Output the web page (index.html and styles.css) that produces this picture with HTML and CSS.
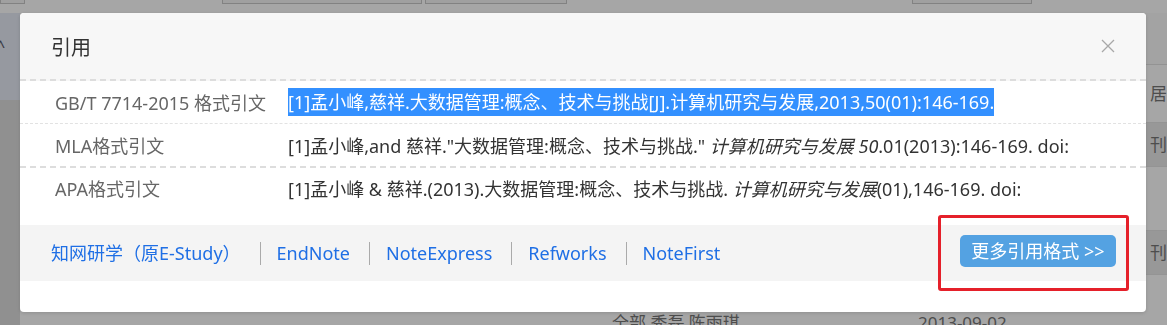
FILE: index.html
```html
<!doctype html>
<html lang="zh-CN">

<head>
  <meta charset="UTF-8" />
  <meta name="viewport" content="width=device-width, initial-scale=1.0" />
  <title>引用</title>
  <link rel="stylesheet" href="styles.css">
</head>

<body>
  <div class="page">
    <div class="page-top">
      <div class="tab tab-a"></div>
      <div class="tab tab-b"></div>
      <div class="tab tab-c"></div>
      <div class="tab tab-d"></div>
    </div>
    <div class="page-body">
      <div class="side">
        <div class="side-active"><span class="side-arrow">^</span></div>
      </div>
      <div class="table">
        <div class="thead"></div>
        <div class="trow row-a"><span></span><span></span><span></span><span>居库</span></div>
        <div class="trow row-b"><span></span><span></span><span></span><span>刊</span></div>
        <div class="trow row-c"><span></span><span></span><span></span><span></span></div>
        <div class="trow row-d"><span></span><span></span><span></span><span>刊</span></div>
        <div class="trow row-e"><span></span><span>全部 秀磊 陈雨琪</span><span>2013-09-02</span><span></span></div>
      </div>
    </div>
  </div>

  <div class="mask"></div>

  <div class="dialog">
    <div class="dialog-head">
      <span class="dialog-title">引用</span>
      <svg class="dialog-close" width="14" height="14" viewBox="0 0 14 14">
        <path d="M1 1 L13 13 M13 1 L1 13" stroke="#a8a8a8" stroke-width="1.3" fill="none" />
      </svg>
    </div>

    <div class="quote-list">
      <div class="quote-row row-first">
        <div class="quote-label">GB/T 7714-2015 格式引文</div>
        <div class="quote-text"><span class="selected">[1]孟小峰,慈祥.大数据管理:概念、技术与挑战[J].计算机研究与发展,2013,50(01):146-169.</span></div>
      </div>
      <div class="quote-row row-second">
        <div class="quote-label">MLA格式引文</div>
        <div class="quote-text">[1]孟小峰,and 慈祥."大数据管理:概念、技术与挑战." <i>计算机研究与发展 50</i>.01(2013):146-169. doi:</div>
      </div>
      <div class="quote-row">
        <div class="quote-label">APA格式引文</div>
        <div class="quote-text">[1]孟小峰 &amp; 慈祥.(2013).大数据管理:概念、技术与挑战. <i>计算机研究与发展</i>(01),146-169. doi:</div>
      </div>
    </div>

    <div class="dialog-foot">
      <div class="export-links">
        <a>知网研学（原E-Study）</a>
        <a>EndNote</a>
        <a>NoteExpress</a>
        <a>Refworks</a>
        <a>NoteFirst</a>
      </div>
      <div class="btn-more">更多引用格式 &gt;&gt;</div>
    </div>

    <div class="mark-box"></div>
  </div>
</body>

</html>
```

FILE: styles.css
```css
* {
  box-sizing: border-box;
}

body {
  margin: 0;
  width: 1167px;
  height: 325px;
  overflow: hidden;
  font-family: "Noto Sans", "Noto Sans CJK SC", sans-serif;
  background-color: #EAEAEA;
}

/* page behind the dialog */
.page {
  width: 1167px;
  height: 325px;
}

.page-top {
  display: flex;
  height: 13px;
  background-color: #FFFFFF;
}

.tab {
  height: 4px;
  border: 1px solid #C8C8C8;
  border-top: none;
  background-color: #F6F6F6;
}

.tab-a {
  width: 25px;
}

.tab-b {
  width: 200px;
  margin-left: 197px;
}

.tab-c {
  width: 142px;
  margin-left: 3px;
}

.tab-d {
  width: 120px;
  margin-left: 345px;
}

.page-body {
  display: flex;
}

.side {
  width: 20px;
  flex-shrink: 0;
  height: 312px;
  background-color: #DEDEDE;
  overflow: hidden;
}

.side-active {
  height: 87px;
  background-color: #E6EBF6;
  color: #556;
  font-size: 16px;
  padding-top: 22px;
}

.side-arrow {
  margin-left: -4px;
}

.table {
  flex: 1;
  min-width: 0;
}

.thead {
  height: 52px;
  background-color: #FAFAFA;
  border-bottom: 1px solid #E2E2E2;
}

.trow {
  display: grid;
  grid-template-columns: 592px 306px 232px minmax(0, 1fr);
  font-size: 17px;
  color: #777777;
  white-space: nowrap;
  overflow: hidden;
  border-bottom: 1px solid #E4E4E4;
}

.row-a {
  height: 58px;
  line-height: 58px;
  background-color: #FFFFFF;
}

.row-b {
  height: 44px;
  line-height: 44px;
}

.row-c {
  height: 64px;
  background-color: #FFFFFF;
}

.row-d {
  height: 44px;
  line-height: 44px;
}

.row-e {
  padding-top: 36px;
  line-height: 24px;
  background-color: #FFFFFF;
}

.mask {
  position: fixed;
  top: 0;
  left: 0;
  right: 0;
  bottom: 0;
  background-color: rgba(0, 0, 0, 0.35);
}

/* dialog */
.dialog {
  position: fixed;
  left: 20px;
  top: 13px;
  width: 1126px;
  height: 299px;
  background-color: #FFFFFF;
  border-radius: 4px;
  box-shadow: 0 1px 4px rgba(0, 0, 0, 0.15);
}

.dialog-head {
  display: flex;
  align-items: center;
  justify-content: space-between;
  height: 68px;
  padding: 0 31px;
  background-color: #F7F7F7;
  border-radius: 4px 4px 0 0;
  border-bottom: 2px dashed #DDDDDD;
}

.dialog-title {
  font-size: 20px;
  color: #333333;
}

.quote-row {
  display: flex;
  align-items: center;
  height: 40px;
  padding-left: 35px;
  font-size: 18px;
}

.row-first {
  height: 43px;
  border-bottom: 1px dashed #E2E2E2;
}

.row-second {
  height: 44px;
  border-bottom: 2px dashed #DDDDDD;
}

.quote-label {
  width: 233px;
  flex-shrink: 0;
  color: #666666;
  white-space: nowrap;
}

.quote-text {
  color: #333333;
  white-space: nowrap;
}

.quote-text i {
  font-style: italic;
}

.selected {
  display: inline-block;
  height: 28px;
  line-height: 28px;
  background-color: #3390FF;
  color: #FFFFFF;
}

.dialog-foot {
  display: flex;
  align-items: center;
  justify-content: space-between;
  height: 56px;
  margin-top: 17px;
  padding: 0 30px 0 31px;
  background-color: #F4F4F4;
}

.export-links {
  display: flex;
  font-size: 18px;
}

.export-links a {
  color: #1F6FE5;
  line-height: 23px;
}

.export-links a + a {
  margin-left: 19px;
  padding-left: 16px;
  border-left: 1px solid #AAAAAA;
}

.btn-more {
  width: 156px;
  height: 32px;
  margin-top: -4px;
  line-height: 32px;
  text-align: center;
  font-size: 18px;
  color: #FFFFFF;
  background-color: #54A2E2;
  border-radius: 5px;
}

.mark-box {
  position: absolute;
  left: 918px;
  top: 202px;
  width: 191px;
  height: 76px;
  border: 3px solid #E5202A;
  border-radius: 3px;
}
```
